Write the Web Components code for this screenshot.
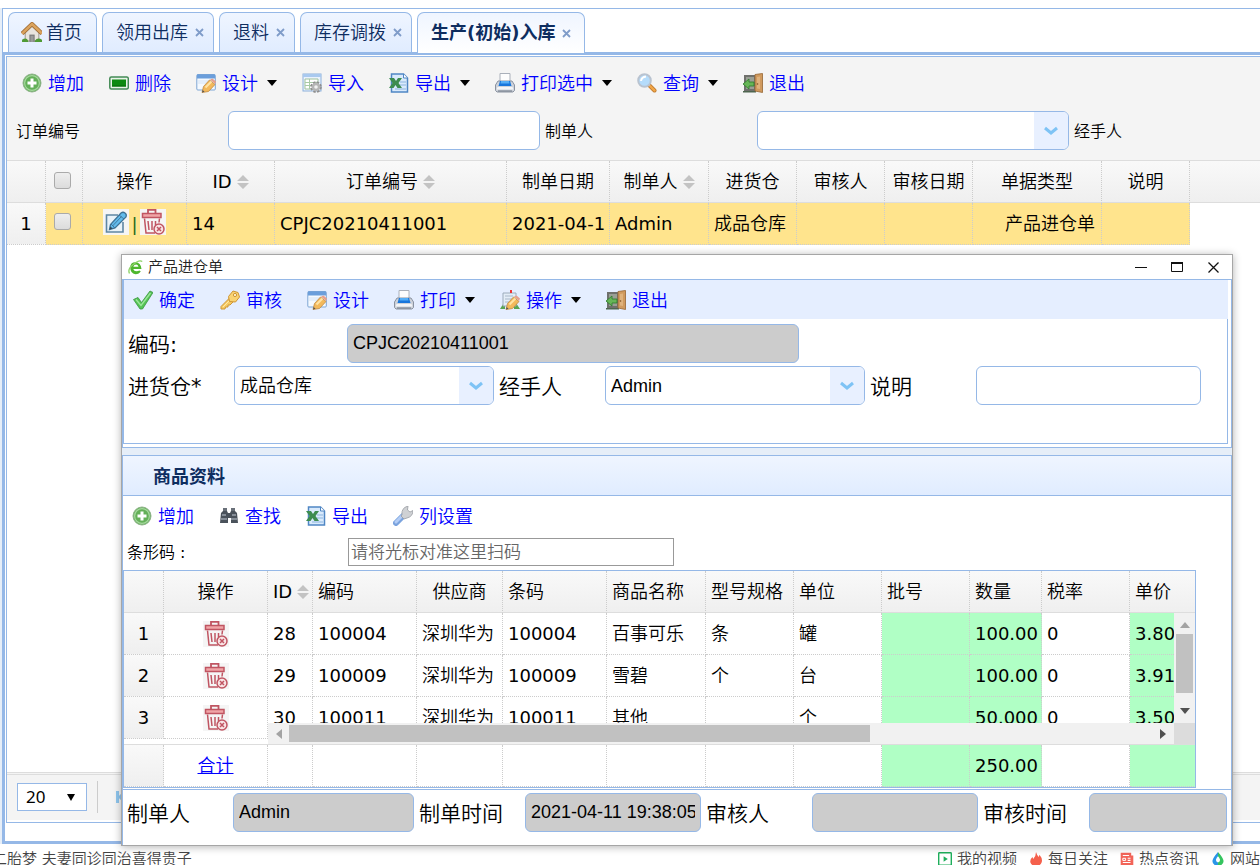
<!DOCTYPE html>
<html lang="zh-CN">
<head>
<meta charset="UTF-8">
<title>生产(初始)入库</title>
<style>
    :root {
        --line: #95B8E7;
        --grid: #ccc;
        --link: #0000ff;
        --navy: #0E2D5F;
    }
    * {
        box-sizing: border-box;
    }
    body {
        margin: 0;
        padding-top: 8px;
        height: 100vh;
        overflow: hidden;
        display: flex;
        flex-direction: column;
        background: #fff;
        color: #000;
        font: 18px/24px "DejaVu Sans", "Noto Sans CJK SC", sans-serif;
        font-weight: 350;
    }
    .workspace {
        flex: 1;
        min-height: 0;
        display: flex;
        flex-direction: column;
        border-left: 2px solid #E6EEF8;
    }
    .search {
        display: flex;
        gap: 5px;
        padding: 2px 0 10px 9px;
        overflow: hidden;
        background: #F4F4F4;
        --label-size: 16px;
        --label-width: 212px;
    }
    .search form-field {
        flex: none;
        --box-width: 312px;
    }
    .blank {
        flex: 1;
    }
    .row {
        display: flex;
        gap: 5px;
        padding: 0 4px;
        margin-bottom: 3px;
    }
    .wide {
        --label-width: 219px;
        --box-width: 452px;
    }
    .w260 { --box-width: 260px; }
    .w225 { --box-width: 225px; }
    .w181 { --box-width: 181px; }
    .w176 { --box-width: 176px; }
    .w166 { --box-width: 166px; }
    .w138 { --box-width: 138px; }
</style>
</head>
<body>
    <div class="workspace">
        <tab-strip></tab-strip>
        <main-panel>
            <tool-bar items="add:增加,remove:删除,design:设计:menu,import:导入,excel:导出:menu,print:打印选中:menu,search:查询:menu,exit:退出"></tool-bar>
            <div class="search">
                <form-field label="订单编号"></form-field>
                <form-field label="制单人" type="select"></form-field>
                <form-field label="经手人"></form-field>
            </div>
            <order-grid></order-grid>
            <div class="blank"></div>
            <grid-pager></grid-pager>
        </main-panel>
    </div>
    <news-bar></news-bar>

    <popup-window heading="产品进仓单">
        <tool-bar slot="tools" items="ok:确定,key:审核,design:设计,print:打印:menu,operate:操作:menu,exit:退出"></tool-bar>
        <div slot="form">
            <div class="row">
                <form-field class="wide" label="编码:" value="CPJC20210411001" readonly></form-field>
            </div>
            <div class="row">
                <form-field class="w260" label="进货仓*" type="select" value="成品仓库"></form-field>
                <form-field class="w260" label="经手人" type="select" value="Admin"></form-field>
                <form-field class="w225" label="说明"></form-field>
            </div>
        </div>
        <goods-panel slot="detail"></goods-panel>
        <div slot="sign" class="row">
            <form-field class="w181" label="制单人" value="Admin" readonly></form-field>
            <form-field class="w176" label="制单时间" value="2021-04-11 19:38:05" readonly></form-field>
            <form-field class="w166" label="审核人" readonly></form-field>
            <form-field class="w138" label="审核时间" readonly></form-field>
        </div>
    </popup-window>

<script>
const PENCIL = `<path d="M6 19.500l1.500-6 6-6.500 5.500 4.500-6.500 7z" fill="#f3b95c" stroke="#c08a42" stroke-width=".8"/><path d="M9.500 14.500l6-6" stroke="#ffe4a6" stroke-width="2"/><path d="M14 6.500l5 4.500 1-2.500-3.500-3z" fill="#e8a08c"/><path d="M6 19.500l.7-2.500 1.800 1.800z" fill="#555"/>`;

const ICONS = {
    home: `<path d="M4 10v8h13v-8l-6.500-6z" fill="#e8e4de" stroke="#a39a8c"/><path d="M1 17q4-3 6 1v1H1zM13 18q3-4 7-1v2h-7z" fill="#4f9a35"/><path d="M1 11L10.500 2 20 11" fill="none" stroke="#9f6b33" stroke-width="4"/><path d="M1 11L10.500 2 20 11" fill="none" stroke="#dba35d" stroke-width="2.400"/><path d="M8 12h5v7H8z" fill="#777"/><path d="M9 13h3v6H9z" fill="#9b9b9b"/>`,
    add: `<circle cx="10" cy="10" r="9" fill="#64b059" stroke="#8fb28a"/><circle cx="10" cy="10" r="7.400" fill="none" stroke="#a5d79d" stroke-width="1.200"/><path d="M10 5.500v9M5.500 10h9" stroke="#fff" stroke-width="3"/>`,
    remove: `<rect x=".8" y="4" width="18.500" height="12" rx="1.500" fill="#e8f3e8" stroke="#438a55" stroke-width="1.500"/><rect x="3" y="6.500" width="14" height="7" fill="#0c8a10"/><path d="M3 13h14" stroke="#056808"/>`,
    design: `<rect x=".8" y="1.500" width="18.500" height="15.500" rx="1" fill="#f4f9ff" stroke="#7ea6d4"/><path d="M1 1.500h18v4H1z" fill="#6b9edb"/><path d="M2 7h15v4H2z" fill="#e4eefa"/>${PENCIL}`,
    import: `<rect x="1" y="1" width="18" height="17" fill="#eaf2fd" stroke="#8cb0da"/><path d="M1 1h18v3H1z" fill="#a9c9ef"/><path d="M3 6h13v10H3z" fill="#fff" stroke="#9fc19c"/><path d="M3 9.500h13M3 12.500h13M7.500 6v10" stroke="#a9cba6"/><circle cx="14" cy="14" r="4.300" fill="none" stroke="#8f8f8f" stroke-width="3" stroke-dasharray="2.200 1.200"/><circle cx="14" cy="14" r="4.300" fill="#b5b5b5"/><circle cx="14" cy="14" r="1.800" fill="#f2f2f2"/>`,
    excel: `<path d="M2.500 1h12l4 4v14h-16z" fill="#d9eafc" stroke="#4f86c4" stroke-width="1.500"/><path d="M14.500 1v4h4" fill="#fff" stroke="#4f86c4"/><path d="M11 9h6M11 12h6M6 16h11" stroke="#8cb5df"/><path d="M0 5h5l2 3 2-3h4l-3.500 5 3.500 5H8.500l-2-3-2 3H0l3.500-5z" fill="#3d8c50"/>`,
    print: `<path d="M5 9V.5h10V9z" fill="#fdfdfd" stroke="#aab0ba"/><path d="M3 8h14l2.500 4v5.500l-1.500 1.500H2L.5 17.500V12z" fill="#cdd2da" stroke="#8a92a0"/><path d="M5 8h10l1.500 5h-13z" fill="#1876dc"/><path d="M6 8h8l.5 2.500h-9z" fill="#55aef7"/><path d="M2.500 14h15l1 2.500h-17z" fill="#f4f5f7"/><path d="M3 18h14" stroke="#6f7886"/>`,
    search: `<path d="M12 12l5.500 5.500" stroke="#c07c30" stroke-width="4" stroke-linecap="round"/><path d="M13 13l4.500 4.500" stroke="#f3a747" stroke-width="2.400" stroke-linecap="round"/><circle cx="7.500" cy="7.500" r="6.300" fill="#b5dcfb" stroke="#b9c3d0" stroke-width="2"/><path d="M4 8q.5-4 5-4.500" fill="none" stroke="#fff" stroke-width="2"/>`,
    exit: `<path d="M1 2h12v16H1z" fill="#6f706c"/><path d="M3 4h8v12H3z" fill="#9a9f95"/><path d="M0 18h13v1.500H0z" fill="#4f6650"/><path d="M12 1.500L19.500.5v19L12 18z" fill="#d09a5e" stroke="#966432" stroke-width=".8"/><path d="M14 4l3-.5V16l-3-.5z" fill="#dfb27c"/><circle cx="14.500" cy="11" r=".8" fill="#7a4d20"/><path d="M0 11l6-5v3h5v4H6v3z" fill="#66b556" stroke="#2c7a29" stroke-width=".8"/>`,
    ok: `<path d="M.5 9.500l4.500-2 3.500 5L17 1l3 1.500L9.500 19H7z" fill="#55c455" stroke="#3a9440" stroke-width=".8"/><path d="M3 9.500l5 6L17.500 3" fill="none" stroke="#9de79b" stroke-width="1.400"/>`,
    key: `<path d="M9.500 8L1 16.500V19h4l.5-2H8v-2h2l3-3" fill="#f6cb66" stroke="#cf9534"/><path d="M8.500 6.500L13 1l5 1.500 1.500 4.500-4 5-6-.5z" fill="#f9d373" stroke="#cf9534" stroke-linejoin="round"/><circle cx="15" cy="5" r="1.600" fill="#fff7dc" stroke="#cf9534"/><path d="M9 11l-6 6" stroke="#ffe9a8"/>`,
    operate: `<path d="M0 19l5-8v8zM20 19l-6-9v9z" fill="#5aa552"/><path d="M3 3h13v13H3z" fill="#e4edf7" stroke="#9cabbb"/><path d="M5 6h8M5 9h8M5 12h5" stroke="#a8b7c8"/><path d="M11 0v3" stroke="#e33" stroke-width="2"/>${PENCIL}`,
    find: `<path d="M4 2h4v4H4zM12 2h4v4h-4z" fill="#697079"/><path d="M2 7l2-2h4l1 2h2l1-2h4l2 2 1 10h-7v-5H9v5H1z" fill="#4a525b"/><path d="M3 9h4M13 9h4M2 13h6M12 13h6" stroke="#9aa3ad" stroke-width="1.500"/>`,
    wrench: `<path d="M3 17l7-7" stroke="#7ba3de" stroke-width="6" stroke-linecap="round"/><path d="M3 16l6-6" stroke="#b3cdf6" stroke-width="3" stroke-linecap="round"/><path d="M9 9q-1-7 6-9l-.5 4L17 6l3-1.500q0 6-6 7.500l-3 1-3-3z" fill="#cfd1d4" stroke="#989ca2" stroke-width=".8"/>`,
    edit: `<path d="M0 0h26v26H0z" fill="#f5f5f5"/><path d="M15 6H3.500v17h16.500V13" fill="#e8f2f9" stroke="#5f86a3" stroke-width="1.600"/><path d="M6.500 20.500l1-5L18 4q2-1.500 4 0t1 4L12 19z" fill="#62bbec" stroke="#3f7396" stroke-width="1.300"/><path d="M16 6l5 4M9.500 17L18.500 7.500M8 15l4 4" stroke="#3f7396" stroke-width=".9"/><path d="M6.500 20.500l1-3 2 2z" fill="#345"/>`,
    trash: `<path d="M0 0h26v26H0z" fill="#f5f5f5"/><g fill="none" stroke="#c05562" stroke-width="1.500"><path d="M8 4V.8h7.500V4" stroke-width="1.800"/><path d="M2.500 4.500h18.500v4H2.500z" fill="#f0a5a7"/><path d="M4.500 9.500L6 24h9M19.500 9.500l-.5 4M8 12l1 9M12 12v9M15.500 12v4"/><circle cx="19" cy="20" r="5" fill="#f9e4e5"/><path d="M17 18l4 4M21 18l-4 4"/></g>`,
    browser: `<path d="M3 10Q3 3 10 3q7 0 8 9H7q1 3 4 3 3 0 4-1l2 1q-2 4-7 4-7-1-7-9z" fill="#4eb62d"/><path d="M7 9q1-3 4-3 2 0 3 3z" fill="#fff"/><path d="M2 18Q-1 12 7 6 15-1 19 2" fill="none" stroke="#8ed368" stroke-width="1.800"/>`,
    video: `<rect x="1" y="1" width="18" height="18" rx="1" fill="#fff" stroke="#1eae5b" stroke-width="2"/><path d="M8 6l6 4-6 4z" fill="#1eae5b"/>`,
    fire: `<path d="M10 0q1 4 4 7l1-3q5 6 3 11-2 5-8 5T2 15Q1 10 5 7l1 3q4-4 4-10z" fill="#f5604c"/>`,
    news: `<path d="M1 1h15v4h3v14H1z" fill="#f26458"/><path d="M4 5h9M4 15h11M11 9h4M11 12h4" stroke="#fff" stroke-width="1.600"/><path d="M4 9h4v3H4z" fill="none" stroke="#fff" stroke-width="1.400"/>`,
    drop: `<path d="M10 0q8 9 8 13 0 6-8 7V15q3-1 3-4-1-3-3-5z" fill="#35c45f"/><path d="M10 0Q2 9 2 13q0 6 8 7V15q-3-1-3-4 1-3 3-5z" fill="#2b95e8"/>`
};

class AppIcon extends HTMLElement {
    constructor() {
        super();
        this.attachShadow({ mode: "open" });
    }

    connectedCallback() {
        const size = this.getAttribute("size") || 20;
        const name = this.getAttribute("name");
        const box = name == "edit" || name == "trash" ? 26 : 20;
        this.shadowRoot.innerHTML = `
            <style>
            :host{ display: inline-block; flex: none; }
            svg{ display: block; }
            </style>
            <svg width="${size}" height="${size}" viewBox="0 0 ${box} ${box}" aria-hidden="true">${ICONS[name]}</svg>`;
    }
}
customElements.define("app-icon", AppIcon);

class TabStrip extends HTMLElement {
    constructor() {
        super();
        this.attachShadow({ mode: "open" });
        const tabs = ["首页", "领用出库", "退料", "库存调拨", "生产(初始)入库"];
        this.shadowRoot.innerHTML = `
            <style>
            *{ box-sizing: border-box; }
            :host{
                display: flex;
                gap: 5px;
                padding: 3px 5px 0;
                border-top: 1px solid var(--line);
                border-left: 1px solid var(--line);
                position: relative;
                z-index: 1;
            }
            .tab{
                display: flex;
                align-items: center;
                gap: 5px;
                height: 40px;
                padding: 0 8px 0 13px;
                border: 1px solid var(--line);
                border-bottom: 0;
                border-radius: 7px 7px 0 0;
                background: linear-gradient(#EFF5FF, #E0ECFF);
                color: var(--navy);
            }
            .tab.home{ padding: 0 14px 0 12px; gap: 4px; }
            .tab.on{
                margin-bottom: -1px;
                height: 41px;
                padding-right: 12px;
                background: linear-gradient(#EFF5FF, #fff);
                font-weight: bold;
            }
            button{
                border: 0;
                padding: 0;
                background: none;
                font: inherit;
                color: inherit;
            }
            .close{ display: flex; width: 12px; justify-content: center; }
            </style>
            ${tabs.map((t, i) => `
            <div class="tab ${i == 0 ? "home" : i == 4 ? "on" : ""}">
                ${i == 0 ? `<app-icon name="home" size="21"></app-icon>` : ""}
                <button>${t}</button>
                ${i ? `<button class="close" aria-label="关闭"><svg width="9" height="9" viewBox="0 0 9 9"><path d="M1 1l7 7M8 1L1 8" stroke="#7f9cc9" stroke-width="1.800"/></svg></button>` : ""}
            </div>`).join("")}`;
    }
}
customElements.define("tab-strip", TabStrip);

class MainPanel extends HTMLElement {
    constructor() {
        super();
        this.attachShadow({ mode: "open" });
        this.shadowRoot.innerHTML = `
            <style>
            *{ box-sizing: border-box; }
            :host{
                flex: 1;
                min-height: 0;
                display: flex;
                box-sizing: border-box;
                border: 3px solid var(--line);
                border-right: 0;
                padding: 1px 0 18px 1px;
            }
            .panel{
                flex: 1;
                min-width: 0;
                display: flex;
                flex-direction: column;
                border: 1px solid var(--line);
                border-right: 0;
            }
            ::slotted(tool-bar){
                --bar-height: 52px;
                --bar-start: 15px;
                background: #F4F4F4;
            }
            </style>
            <div class="panel"><slot></slot></div>`;
    }
}
customElements.define("main-panel", MainPanel);

class ToolBar extends HTMLElement {
    constructor() {
        super();
        this.attachShadow({ mode: "open" });
    }

    connectedCallback() {
        const items = this.getAttribute("items").split(",").map(s => s.split(":"));
        this.shadowRoot.innerHTML = `
            <style>
            :host{
                display: flex;
                align-items: center;
                gap: 25px;
                box-sizing: border-box;
                height: var(--bar-height, 39px);
                padding-left: var(--bar-start, 9px);
            }
            button{
                display: flex;
                align-items: center;
                gap: 6px;
                border: 0;
                padding: 0;
                background: none;
                color: var(--link);
                font: inherit;
                white-space: nowrap;
                cursor: pointer;
            }
            span{ padding-top: 2px; }
            .caret{
                margin-left: 3px;
                border: 5px solid transparent;
                border-top: 6px solid #000;
                border-bottom: 0;
            }
            </style>
            ${items.map(([icon, text, menu]) => `<button><app-icon name="${icon}"></app-icon><span>${text}</span>${menu ? `<i class="caret"></i>` : ""}</button>`).join("")}`;
    }
}
customElements.define("tool-bar", ToolBar);

class FormField extends HTMLElement {
    constructor() {
        super();
        this.attachShadow({ mode: "open" });
    }

    connectedCallback() {
        const value = this.getAttribute("value") || "";
        const label = this.getAttribute("label").replace(/[:*]/, "<b>$&</b>");
        const isSelect = this.getAttribute("type") == "select";
        const control = isSelect
            ? `<select id="box"><option>${value}</option></select><span class="arrow"><svg width="14" height="10" viewBox="0 0 14 10"><path d="M1 2l6 5 6-5" fill="none" stroke="#7ec3f5" stroke-width="3"/></svg></span>`
            : `<input id="box" type="text" value="${value}" ${this.hasAttribute("readonly") ? "readonly" : ""}>`;
        this.shadowRoot.innerHTML = `
            <style>
            *{ box-sizing: border-box; }
            :host{ display: flex; align-items: center; }
            label{
                width: var(--label-width, 106px);
                padding-top: 2px;
                font-size: var(--label-size, 21px);
                white-space: nowrap;
            }
            label b{ font-weight: 400; }
            .control{
                position: relative;
                width: var(--box-width, 260px);
                height: 39px;
            }
            input, select{
                appearance: none;
                display: block;
                width: 100%;
                height: 100%;
                margin: 0;
                padding: 0 5px;
                border: 1px solid var(--line);
                border-radius: 6px;
                background: #fff;
                color: #000;
                font: 18px "Liberation Sans", "Noto Sans CJK SC", sans-serif;
                font-weight: 350;
            }
            input[readonly]{ background: #ccc; }
            .arrow{
                position: absolute;
                top: 1px;
                right: 1px;
                bottom: 1px;
                width: 34px;
                display: flex;
                align-items: center;
                justify-content: center;
                background: #E8F0FF;
                border-radius: 0 5px 5px 0;
                pointer-events: none;
            }
            </style>
            <label for="box">${label}</label>
            <div class="control">${control}</div>`;
    }
}
customElements.define("form-field", FormField);

const GRID_STYLE = `
    *{ box-sizing: border-box; }
    table{
        table-layout: fixed;
        border-spacing: 0;
        width: 0;
    }
    th, td{
        height: 42px;
        padding: 0 4px 0 5px;
        border-right: 1px dotted var(--grid);
        border-bottom: 1px dotted var(--grid);
        overflow: hidden;
        white-space: nowrap;
        text-align: left;
        font-weight: inherit;
    }
    th{ border-bottom: 1px solid #ddd; }
    .latin{ font-weight: 400; }
    .head, .num{ background: linear-gradient(#F9F9F9, #EFEFEF); }
    .center, .num{ text-align: center; padding: 0; }
    .right{ text-align: right; padding-right: 6px; }
    .sort{ margin-left: 5px; vertical-align: -1px; }
    button{ border: 0; padding: 0; background: none; cursor: pointer; }
    app-icon{ vertical-align: middle; }
`;
const SORT = `<svg class="sort" width="12" height="14" viewBox="0 0 12 14"><path d="M0 6l6-6 6 6zM0 8h12l-6 6z" fill="#c3c3c3"/></svg>`;

function colgroup(widths) {
    return `<colgroup>${widths.map(w => `<col style="width:${w}px">`).join("")}</colgroup>`;
}

// digits and letters need the normal weight, Chinese the lighter one
function weight(text) {
    return /^[\x20-\x7e]+$/.test(text) ? "latin" : "";
}

class OrderGrid extends HTMLElement {
    constructor() {
        super();
        this.attachShadow({ mode: "open" });
        const widths = [39, 37, 104, 88, 232, 103, 99, 88, 88, 88, 129, 88];
        const heads = ["操作", `<span class="latin">ID</span>` + SORT, "订单编号" + SORT, "制单日期", "制单人" + SORT, "进货仓", "审核人", "审核日期", "单据类型", "说明"];
        const row = ["14", "CPJC20210411001", "2021-04-1", "Admin", "成品仓库", "", "", "产品进仓单", ""];
        this.shadowRoot.innerHTML = `
            <style>
            ${GRID_STYLE}
            :host{
                display: block;
                overflow: hidden;
                border-top: 1px solid #ddd;
                background: linear-gradient(#F9F9F9, #EFEFEF) 0 0 / 100% 41px no-repeat, linear-gradient(#ddd, #ddd) 0 41px / 100% 1px no-repeat;
            }
            tbody td{ background: #FFE48D; }
            tbody .num{ background: linear-gradient(#F9F9F9, #EFEFEF); }
            .check{ padding: 0 3px 0 0; }
            input{
                appearance: none;
                display: block;
                margin: 0 auto 4px;
                width: 17px;
                height: 17px;
                border: 1px solid #aaa;
                border-radius: 3px;
                background: linear-gradient(#eee, #dcdcdc);
            }
            thead input{ margin-bottom: 2px; }
            .ops span{ color: #1d6b1d; position: relative; top: 4px; margin: 0 2px; }
            .ops app-icon{ margin-bottom: 4px; }
            </style>
            <table>
                ${colgroup(widths)}
                <thead><tr>
                    <th></th>
                    <th class="check"><input type="checkbox" aria-label="全选"></th>
                    ${heads.map(h => `<th class="center">${h}</th>`).join("")}
                </tr></thead>
                <tbody><tr>
                    <td class="num latin">1</td>
                    <td class="check"><input type="checkbox" aria-label="选择"></td>
                    <td class="center ops latin"><button aria-label="编辑"><app-icon name="edit" size="26"></app-icon></button><span>|</span><button aria-label="删除"><app-icon name="trash" size="26"></app-icon></button></td>
                    ${row.map((v, i) => `<td class="${weight(v)} ${i == 7 ? "right" : ""}">${v}</td>`).join("")}
                </tr></tbody>
            </table>`;
    }
}
customElements.define("order-grid", OrderGrid);

class GridPager extends HTMLElement {
    constructor() {
        super();
        this.attachShadow({ mode: "open" });
        this.shadowRoot.innerHTML = `
            <style>
            *{ box-sizing: border-box; }
            :host{
                display: flex;
                align-items: center;
                gap: 10px;
                height: 50px;
                padding: 0 10px 2px;
                border-top: 3px double #ddd;
                border-bottom: 2px solid #fff;
                background: #F4F4F4;
            }
            .size{ position: relative; }
            select{
                appearance: none;
                display: block;
                width: 70px;
                height: 28px;
                padding: 0 8px;
                border: 1px solid var(--line);
                background: #fff;
                color: #000;
                font: 17px "Noto Sans", sans-serif;
            }
            .size i{
                position: absolute;
                right: 12px;
                top: 11px;
                border: 4px solid transparent;
                border-top: 7px solid #000;
                border-bottom: 0;
            }
            hr{ width: 1px; height: 32px; margin: 0; border: 0; background: #ccc; }
            button{ border: 0; padding: 0 0 0 8px; background: none; display: flex; }
            </style>
            <div class="size"><select aria-label="每页条数"><option>20</option></select><i></i></div>
            <hr>
            <button aria-label="第一页"><svg width="14" height="14" viewBox="0 0 14 14"><path d="M1.500 1v12M9 2L4 7l5 5" fill="none" stroke="#8fc6ee" stroke-width="3"/></svg></button>`;
    }
}
customElements.define("grid-pager", GridPager);

class NewsBar extends HTMLElement {
    constructor() {
        super();
        this.attachShadow({ mode: "open" });
        const links = [["video", "我的视频"], ["fire", "每日关注"], ["news", "热点资讯"], ["drop", "网站"]];
        this.shadowRoot.innerHTML = `
            <style>
            :host{
                display: flex;
                justify-content: space-between;
                align-items: flex-start;
                height: 21px;
                overflow: hidden;
                box-sizing: border-box;
                padding-top: 4px;
                font-size: 15px;
                line-height: 22px;
                white-space: nowrap;
            }
            a{ color: #444; text-decoration: none; }
            .ad{ margin-left: -8px; }
            nav{ display: flex; gap: 12px; }
            nav a{ display: flex; align-items: center; gap: 5px; }
            </style>
            <a class="ad" href="#">二胎梦 夫妻同诊同治喜得贵子</a>
            <nav>${links.map(([icon, text]) => `<a href="#"><app-icon name="${icon}" size="14"></app-icon>${text}</a>`).join("")}</nav>`;
    }
}
customElements.define("news-bar", NewsBar);

class PopupWindow extends HTMLElement {
    constructor() {
        super();
        this.attachShadow({ mode: "open" });
        this.shadowRoot.innerHTML = `
            <style>
            *{ box-sizing: border-box; }
            :host{
                position: absolute;
                z-index: 5;
                left: 121px;
                right: 27px;
                top: 254px;
                bottom: 19px;
                display: flex;
                flex-direction: column;
                box-sizing: border-box;
                border: 1px solid #a6a6a6;
                background: #fff;
                box-shadow: 0 1px 8px rgba(0, 0, 0, 0.3);
            }
            header{
                display: flex;
                align-items: center;
                gap: 5px;
                height: 24px;
                padding: 0 12px 0 6px;
                font-size: 15px;
                color: #222;
            }
            header span{ flex: 1; }
            header button{
                display: flex;
                border: 0;
                padding: 0;
                margin-left: 18px;
                background: none;
            }
            .north{
                display: flex;
                height: 169px;
                border: 1px solid var(--line);
                padding: 0 3px 3px 0;
            }
            .inner{
                flex: 1;
                min-width: 0;
                border: 1px solid var(--line);
                border-top: 0;
            }
            ::slotted(tool-bar){
                background: #E5EEFF;
                margin-right: -1px;
                margin-bottom: 5px;
            }
            .splitter{ height: 7px; background: #E6EEF8; }
            .center{
                flex: 1;
                min-height: 0;
                border: 1px solid var(--line);
            }
            footer{ height: 55px; padding-top: 3px; border-left: 1px solid var(--line); border-right: 1px solid var(--line); }
            </style>
            <header>
                <app-icon name="browser" size="15"></app-icon>
                <span></span>
                <button aria-label="最小化"><svg width="13" height="13"><path d="M0 6.500h12" stroke="#111"/></svg></button>
                <button aria-label="最大化"><svg width="13" height="13"><path d="M.5 1.500h11v9h-11z" fill="none" stroke="#111"/><path d="M0 2h12" stroke="#111" stroke-width="2"/></svg></button>
                <button aria-label="关闭"><svg width="13" height="13"><path d="M1.500 1.500l10 10M11.500 1.500l-10 10" stroke="#111" stroke-width="1.300"/></svg></button>
            </header>
            <div class="north"><div class="inner">
                <slot name="tools"></slot>
                <slot name="form"></slot>
            </div></div>
            <div class="splitter"></div>
            <div class="center"><slot name="detail"></slot></div>
            <footer><slot name="sign"></slot></footer>`;
    }

    connectedCallback() {
        this.shadowRoot.querySelector("header span").textContent = this.getAttribute("heading");
    }
}
customElements.define("popup-window", PopupWindow);

class GoodsPanel extends HTMLElement {
    constructor() {
        super();
        this.attachShadow({ mode: "open" });
        this.shadowRoot.innerHTML = `
            <style>
            *{ box-sizing: border-box; }
            :host{ display: block; }
            h2{
                margin: 0;
                height: 40px;
                padding: 9px 30px 6px;
                border-bottom: 1px solid var(--line);
                background: linear-gradient(#EFF5FF, #E0ECFF);
                color: var(--navy);
                font-size: 18px;
                font-weight: bold;
            }
            .scan{
                display: flex;
                align-items: center;
                padding: 3px 4px 4px;
            }
            label{ width: 221px; padding-top: 2px; font-size: 16px; }
            label b{ font-weight: 400; }
            input{
                width: 326px;
                height: 28px;
                padding: 2px 2px 0;
                border: 1px solid #999;
                font: 17px "Liberation Sans", "Noto Sans CJK SC", sans-serif;
                font-weight: 350;
            }
            input::placeholder{ color: #666; }
            </style>
            <h2>商品资料</h2>
            <tool-bar items="add:增加,find:查找,excel:导出,wrench:列设置"></tool-bar>
            <div class="scan">
                <label for="scan">条形码 <b>:</b></label>
                <input id="scan" type="text" placeholder="请将光标对准这里扫码">
            </div>
            <goods-grid></goods-grid>`;
    }
}
customElements.define("goods-panel", GoodsPanel);

class GoodsGrid extends HTMLElement {
    constructor() {
        super();
        this.attachShadow({ mode: "open" });
        const fixed = colgroup([40, 104]);
        const cols = colgroup([45, 104, 86, 104, 99, 88, 88, 88, 72, 88, 88]);
        const heads = [`<span class="latin">ID</span>` + SORT, "编码", "供应商", "条码", "商品名称", "型号规格", "单位", "批号", "数量", "税率", "单价"];
        const rows = [
            ["28", "100004", "深圳华为", "100004", "百事可乐", "条", "罐", "", "100.00", "0", "3.80"],
            ["29", "100009", "深圳华为", "100009", "雪碧", "个", "台", "", "100.00", "0", "3.91"],
            ["30", "100011", "深圳华为", "100011", "其他", "", "个", "", "50.000", "0", "3.50"]
        ];
        const total = ["", "", "", "", "", "", "", "", "250.00", "", ""];
        const green = [7, 8, 10];
        const line = r => `<tr>${r.map((v, i) => `<td class="${weight(v)} ${green.includes(i) ? "green" : ""}">${v}</td>`).join("")}</tr>`;
        this.shadowRoot.innerHTML = `
            <style>
            ${GRID_STYLE}
            :host{
                display: grid;
                grid-template-columns: 144px 1fr;
                margin-right: 35px;
                border: 1px solid var(--line);
                overflow: hidden;
            }
            .head, .foot, .view, .frozen{ overflow: hidden; }
            .frozen{ height: 131px; }
            .foot{ border-top: 1px solid #ddd; }
            .green{ background: #B0FFC5; }
            th.id{ padding-right: 0; }
            .scroll{
                display: grid;
                grid-template-columns: 1fr 21px;
                grid-template-rows: 110px 21px;
                min-width: 0;
            }
            .view{ min-width: 0; }
            .vbar, .hbar{
                display: flex;
                align-items: center;
                justify-content: space-between;
                background: #F1F1F1;
            }
            .vbar{ flex-direction: column; padding: 9px 0; }
            .vbar b{ width: 17px; height: 59px; margin: 6px 0 auto; background: #C1C1C1; }
            .hbar{ padding: 0 8px; }
            .hbar b{ width: 581px; height: 17px; margin: 0 auto 0 7px; background: #C1C1C1; }
            .corner{ background: #DCDCDC; }
            a{ color: var(--link); }
            </style>
            <div class="head"><table>${fixed}<thead><tr><th></th><th class="center">操作</th></tr></thead></table></div>
            <div class="head"><table>${cols}<thead><tr>${heads.map((h, i) => `<th class="${i == 0 ? "id" : i == 2 ? "center" : ""}">${h}</th>`).join("")}</tr></thead></table></div>
            <div class="frozen"><table>${fixed}<tbody>
                ${rows.map((r, i) => `<tr><td class="num latin">${i + 1}</td><td class="center"><button aria-label="删除"><app-icon name="trash" size="26"></app-icon></button></td></tr>`).join("")}
            </tbody></table></div>
            <div class="scroll">
                <div class="view"><table>${cols}<tbody>${rows.map(line).join("")}</tbody></table></div>
                <div class="vbar">
                    <svg width="10" height="6"><path d="M0 6l5-6 5 6z" fill="#a3a3a3"/></svg>
                    <b></b>
                    <svg width="10" height="6"><path d="M0 0h10L5 6z" fill="#505050"/></svg>
                </div>
                <div class="hbar">
                    <svg width="6" height="10"><path d="M6 0v10L0 5z" fill="#a3a3a3"/></svg>
                    <b></b>
                    <svg width="6" height="10"><path d="M0 0l6 5-6 5z" fill="#505050"/></svg>
                </div>
                <div class="corner"></div>
            </div>
            <div class="foot"><table>${fixed}<tbody><tr><td class="num"></td><td class="center"><a href="#">合计</a></td></tr></tbody></table></div>
            <div class="foot"><table>${cols}<tbody>${line(total)}</tbody></table></div>`;
    }
}
customElements.define("goods-grid", GoodsGrid);
</script>
</body>
</html>
